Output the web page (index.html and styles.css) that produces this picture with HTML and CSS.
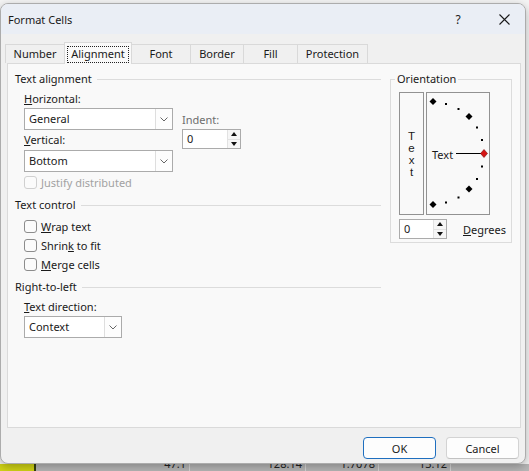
FILE: index.html
```html
<!DOCTYPE html>
<html>
<head>
    <meta charset="UTF-8">
    <title>Format Cells</title>
    <link rel="stylesheet" href="styles.css">
</head>
<body>

    <div class="dialog">
        <div class="titlebar">
            <span class="title">Format Cells</span>
            <span class="help">?</span>
            <span class="close">
                <svg width="11" height="11" viewBox="0 0 11 11"><path d="M0.5 0.5 L10.5 10.5 M10.5 0.5 L0.5 10.5" stroke="#1a1a1a" stroke-width="1.1" fill="none"/></svg>
            </span>
        </div>

        <div class="tabs">
            <div class="tab tab-number">Number</div>
            <div class="tab tab-alignment active"><span class="focus">Alignment</span></div>
            <div class="tab tab-font">Font</div>
            <div class="tab tab-border">Border</div>
            <div class="tab tab-fill">Fill</div>
            <div class="tab tab-protection">Protection</div>
        </div>

        <div class="panel">
            <div class="left">
                <div class="group-head">Text alignment</div>
                <div class="group-body">
                    <div class="align-row">
                        <div class="align-col">
                            <div class="field-label lbl-horizontal"><u>H</u>orizontal:</div>
                            <div class="combo combo-wide combo-first">
                                <span class="combo-value">General</span>
                                <span class="combo-btn"><svg width="8" height="5" viewBox="0 0 8 5"><polyline points="0.5,0.5 4,4 7.5,0.5" fill="none" stroke="#666" stroke-width="1"/></svg></span>
                            </div>
                            <div class="field-label lbl-vertical"><u>V</u>ertical:</div>
                            <div class="combo combo-wide combo-second">
                                <span class="combo-value">Bottom</span>
                                <span class="combo-btn"><svg width="8" height="5" viewBox="0 0 8 5"><polyline points="0.5,0.5 4,4 7.5,0.5" fill="none" stroke="#666" stroke-width="1"/></svg></span>
                            </div>
                        </div>
                        <div class="indent-col">
                            <div class="field-label muted">Indent:</div>
                            <div class="spin spin-indent">
                                <span class="spin-value">0</span>
                                <span class="spin-btns">
                                    <span class="spin-up"></span>
                                    <span class="spin-down"></span>
                                </span>
                            </div>
                        </div>
                    </div>
                    <div class="check-row row-justify disabled">
                        <span class="check"></span>
                        <span>Justify distributed</span>
                    </div>
                </div>

                <div class="group-head head-control">Text control</div>
                <div class="group-body">
                    <div class="check-row row-wrap">
                        <span class="check"></span>
                        <span><u>W</u>rap text</span>
                    </div>
                    <div class="check-row">
                        <span class="check"></span>
                        <span>Shrin<u>k</u> to fit</span>
                    </div>
                    <div class="check-row">
                        <span class="check"></span>
                        <span><u>M</u>erge cells</span>
                    </div>
                </div>

                <div class="group-head head-rtl">Right-to-left</div>
                <div class="group-body">
                    <div class="field-label lbl-direction"><u>T</u>ext direction:</div>
                    <div class="combo combo-narrow">
                        <span class="combo-value">Context</span>
                        <span class="combo-btn"><svg width="8" height="5" viewBox="0 0 8 5"><polyline points="0.5,0.5 4,4 7.5,0.5" fill="none" stroke="#666" stroke-width="1"/></svg></span>
                    </div>
                </div>
            </div>

            <fieldset class="orientation">
                <legend>Orientation</legend>
                <div class="orient-boxes">
                    <div class="vtext">
                        <span class="vtext-word">Text</span>
                    </div>
                    <div class="dial">
                        <svg width="62" height="121" viewBox="0 0 62 121">
                            <g fill="#000">
                                <polygon points="6,5 9.5,8.5 6,12 2.5,8.5"/>
                                <rect x="18" y="10" width="2" height="2"/>
                                <rect x="30.5" y="15" width="2" height="2"/>
                                <polygon points="42,20 45.5,23.5 42,27 38.5,23.5"/>
                                <rect x="49" y="33.5" width="2" height="2"/>
                                <rect x="54" y="46" width="2" height="2"/>
                                <rect x="54" y="72.5" width="2" height="2"/>
                                <rect x="49" y="85" width="2" height="2"/>
                                <polygon points="42,92.5 45.5,96 42,99.5 38.5,96"/>
                                <rect x="30.5" y="103.5" width="2" height="2"/>
                                <rect x="18" y="108.5" width="2" height="2"/>
                                <polygon points="6,108 9.5,111.5 6,115 2.5,111.5"/>
                            </g>
                            <text x="5" y="66" class="dial-text">Text</text>
                            <line x1="29" y1="60.5" x2="54" y2="60.5" stroke="#000" stroke-width="1"/>
                            <polygon points="57,56.5 60.5,60.5 57,64.5 53.5,60.5" fill="#d41414" stroke="#7a0a0a" stroke-width="0.6"/>
                        </svg>
                    </div>
                </div>
                <div class="degree-row">
                    <div class="spin spin-degrees">
                        <span class="spin-value">0</span>
                        <span class="spin-btns">
                            <span class="spin-up"></span>
                            <span class="spin-down"></span>
                        </span>
                    </div>
                    <span class="degrees"><u>D</u>egrees</span>
                </div>
            </fieldset>
        </div>

        <div class="actions">
            <button class="btn btn-default">OK</button>
            <button class="btn">Cancel</button>
        </div>
    </div>

    <div class="sheet">
        <div class="cell cell-yellow"></div>
        <div class="cell cell-a">47.1</div>
        <div class="cell cell-b">128.14</div>
        <div class="cell cell-c">1.7078</div>
        <div class="cell cell-d">13.12</div>
        <div class="cell cell-e"></div>
    </div>

</body>
</html>
```

FILE: styles.css
```css
body {
    margin: 0;
    width: 529px;
    height: 471px;
    overflow: hidden;
    background: #f4f4f4;
    font-family: "Noto Sans", "DejaVu Sans", sans-serif;
    font-size: 11px;
    color: #1a1a1a;
}

.dialog {
    position: relative;
    z-index: 1;
    box-sizing: border-box;
    width: 526px;
    height: 461px;
    margin-top: 3px;
    border: 1px solid #acacac;
    border-radius: 8px;
    background: #f0f0f0;
    box-shadow: 0 3px 10px rgba(0, 0, 0, 0.28);
    display: flex;
    flex-direction: column;
    overflow: hidden;
}

/* title bar */

.titlebar {
    height: 30px;
    display: flex;
    align-items: center;
    padding: 0 6px 0 7px;
    background: #eaeef5;
}

.title {
    flex: 1;
}

.help {
    width: 24px;
    margin-right: 19px;
    text-align: center;
    font-size: 12px;
}

.close {
    width: 30px;
    height: 30px;
    display: flex;
    align-items: center;
    justify-content: center;
}

/* tabs */

.tabs {
    height: 29px;
    display: flex;
    align-items: flex-end;
    padding-left: 4px;
}

.tab {
    box-sizing: border-box;
    height: 19px;
    line-height: 18px;
    text-align: center;
    border: 1px solid #d9d9d9;
    border-bottom: none;
    margin-right: -1px;
    background: #f0f0f0;
}

.tab.active {
    position: relative;
    z-index: 2;
    height: 22px;
    margin-bottom: -1px;
    padding-top: 2px;
    background: #f9f9f9;
}

.focus {
    display: inline-block;
    line-height: 14px;
    padding: 0 3px 1px 3px;
    border: 1px dotted #222;
}

.tab-number { width: 60px; }
.tab-alignment { width: 68px; }
.tab-font { width: 60px; }
.tab-border { width: 54px; }
.tab-fill { width: 55px; }
.tab-protection { width: 71px; }

/* panel */

.panel {
    box-sizing: border-box;
    height: 365px;
    margin: 0 4px 0 6px;
    padding: 7px 0 0 7px;
    border: 1px solid #dadada;
    background: #f9f9f9;
    display: flex;
    align-items: flex-start;
}

.left {
    width: 366px;
}

.group-head {
    display: flex;
    align-items: center;
    height: 16px;
    line-height: 16px;
    white-space: nowrap;
}

.group-head::after {
    content: "";
    flex: 1;
    border-top: 1px solid #dcdcdc;
    margin-left: 5px;
}

.head-control,
.head-rtl {
    margin-top: 7px;
}

.group-body {
    padding-left: 9px;
}

.field-label {
    height: 16px;
    line-height: 16px;
    white-space: nowrap;
}

.muted {
    color: #6d6d6d;
}

.lbl-horizontal { margin-top: 4px; }
.lbl-vertical { margin-top: 2px; }
.lbl-direction { margin-top: 4px; }

.align-row {
    display: flex;
}

.indent-col {
    margin-left: 9px;
    padding-top: 25px;
}

/* combo boxes */

.combo {
    box-sizing: border-box;
    height: 22px;
    display: flex;
    border: 1px solid #ababab;
    background: #fff;
}

.combo-wide { width: 149px; }
.combo-narrow { width: 98px; margin-top: 1px; }
.combo-first { margin-top: 1px; }
.combo-second { margin-top: 2px; }

.combo-value {
    flex: 1;
    line-height: 20px;
    padding-left: 4px;
}

.combo-btn {
    width: 16px;
    border-left: 1px solid #dedede;
    display: flex;
    align-items: center;
    justify-content: center;
    background: #fdfdfd;
}

/* spin boxes */

.spin {
    box-sizing: border-box;
    height: 20px;
    display: flex;
    border: 1px solid #ababab;
    background: #fff;
}

.spin-indent { width: 59px; margin-top: 1px; }
.spin-degrees { width: 48px; }

.spin-value {
    flex: 1;
    line-height: 18px;
    padding-left: 4px;
}

.spin-btns {
    width: 12px;
    display: flex;
    flex-direction: column;
    border-left: 1px solid #e2e2e2;
    background: #f6f6f6;
}

.spin-up,
.spin-down {
    flex: 1;
    display: flex;
    align-items: center;
    justify-content: center;
}

.spin-up {
    border-bottom: 1px solid #e2e2e2;
}

.spin-up::before {
    content: "";
    border-left: 3px solid transparent;
    border-right: 3px solid transparent;
    border-bottom: 4px solid #111;
}

.spin-down::before {
    content: "";
    border-left: 3px solid transparent;
    border-right: 3px solid transparent;
    border-top: 4px solid #111;
}

/* check boxes */

.check-row {
    display: flex;
    align-items: center;
    gap: 4px;
    height: 16px;
    margin-top: 3px;
    white-space: nowrap;
}

.row-justify { margin-top: 2px; }
.row-wrap { margin-top: 5px; }

.check {
    box-sizing: border-box;
    width: 13px;
    height: 13px;
    border: 1px solid #8c8c8c;
    border-radius: 3px;
    background: #fbfbfb;
}

.disabled {
    color: #a2a2a2;
}

.disabled .check {
    border-color: #d0d0d0;
}

/* orientation */

.orientation {
    box-sizing: border-box;
    width: 122px;
    margin: 0 0 0 9px;
    padding: 0 0 3px 4px;
    border: 1px solid #dcdcdc;
}

.orientation legend {
    padding: 0 2px;
    line-height: 16px;
}

.orient-boxes {
    display: flex;
    gap: 2px;
    margin: 5px 0 0 4px;
}

.vtext {
    box-sizing: border-box;
    width: 25px;
    height: 123px;
    border: 1px solid #929292;
    display: flex;
    align-items: center;
    justify-content: center;
}

.vtext-word {
    font-family: "Liberation Sans", Arial, sans-serif;
    font-size: 11.5px;
    writing-mode: vertical-lr;
    text-orientation: upright;
    line-height: 14px;
}

.dial {
    box-sizing: border-box;
    width: 64px;
    height: 123px;
    border: 1px solid #929292;
}

.dial svg {
    display: block;
}

.dial-text {
    font-family: "Noto Sans", "DejaVu Sans", sans-serif;
    font-size: 11px;
    fill: #1a1a1a;
}

.degree-row {
    display: flex;
    align-items: center;
    margin: 4px 0 0 4px;
}

.degrees {
    margin-left: 16px;
}

/* buttons */

.actions {
    display: flex;
    justify-content: flex-end;
    gap: 10px;
    padding: 9px 6px 0 0;
}

.btn {
    box-sizing: border-box;
    width: 73px;
    height: 22px;
    border: 1px solid #d3d3d3;
    border-bottom-color: #c2c2c2;
    border-radius: 4px;
    background: #fdfdfd;
    font-family: "Noto Sans", "DejaVu Sans", sans-serif;
    font-size: 11px;
    color: #1a1a1a;
    padding: 0;
}

.btn-default {
    border: 1px solid #1f6fbf;
}

/* spreadsheet behind the dialog */

.sheet {
    display: flex;
    height: 7px;
    overflow: hidden;
    background: #b7b7b7;
}

.cell {
    box-sizing: border-box;
    height: 14px;
    margin-top: -7px;
    line-height: 14px;
    padding-right: 3px;
    text-align: right;
    border-right: 1px solid #d6d6d6;
    color: #222;
}

.cell-yellow {
    width: 36px;
    background: #d1d415;
    border-right: 2px solid #36420f;
}

.cell-a { width: 154px; }
.cell-b { width: 116px; }
.cell-c { width: 73px; }
.cell-d { width: 72px; }
.cell-e { flex: 1; border-right: none; }
```
